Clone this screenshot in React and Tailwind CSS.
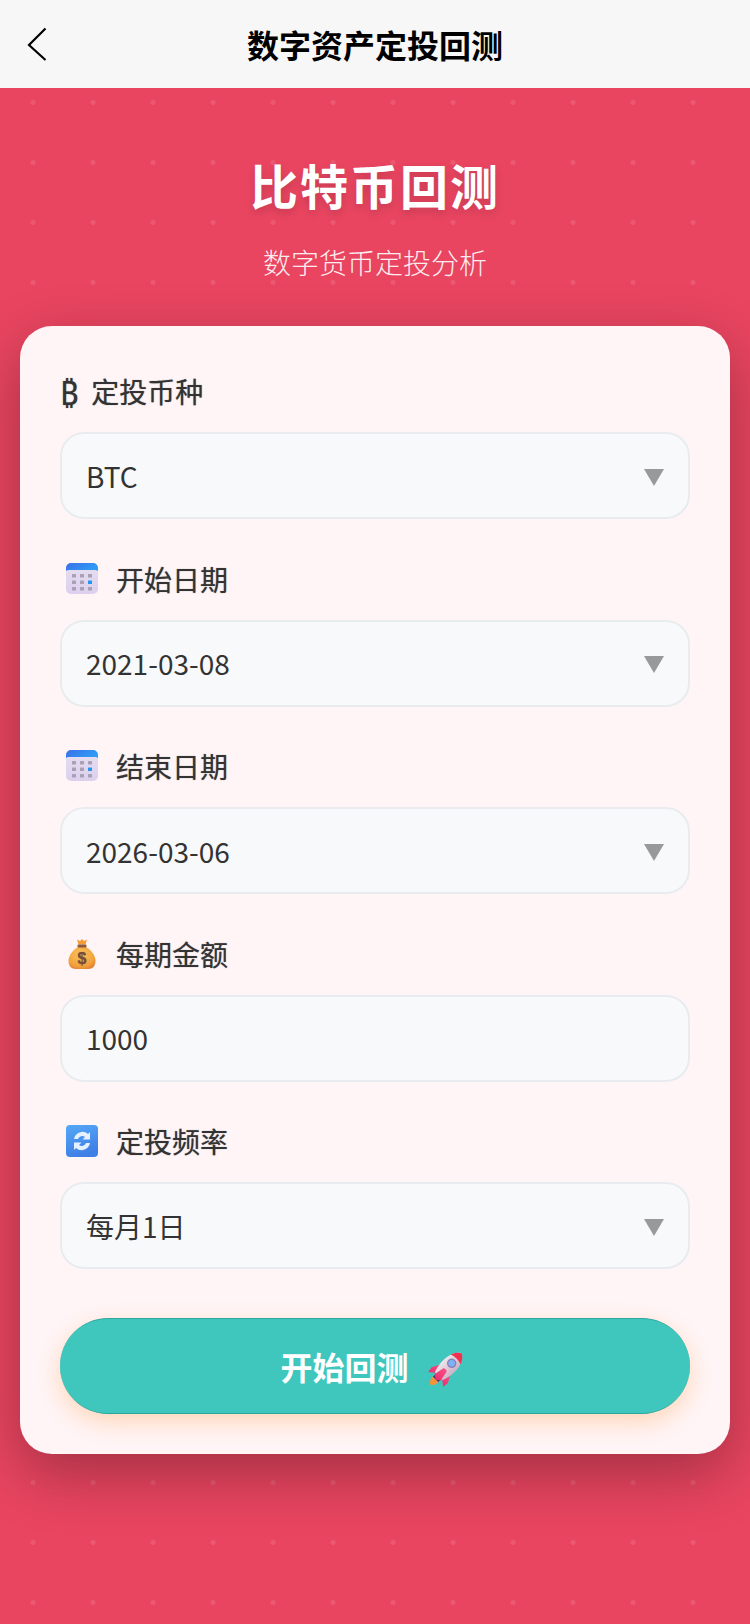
import React from "react";

const Calendar = () => (
  <svg width="32" height="32" viewBox="0 0 32 32" className="block">
    <defs>
      <linearGradient id="calTop" x1="0" y1="0" x2="1" y2="0.4">
        <stop offset="0" stopColor="#3b6fe8" />
        <stop offset="1" stopColor="#2f9bf5" />
      </linearGradient>
      <linearGradient id="calBody" x1="0" y1="0" x2="0" y2="1">
        <stop offset="0" stopColor="#e6dff0" />
        <stop offset="1" stopColor="#dcd0ee" />
      </linearGradient>
    </defs>
    <rect x="0" y="0" width="32" height="31" rx="5" fill="url(#calBody)" />
    <path d="M0 8V5a5 5 0 0 1 5-5h22a5 5 0 0 1 5 5v3q-1-1-3-1H3q-2 0-3 1z" fill="url(#calTop)" />
    {[6, 14, 22].map((x) =>
      [11, 17.5, 24].map((y) => (
        <rect key={`${x}-${y}`} x={x} y={y} width="4" height="3.6" rx="0.5" fill={x === 22 && y === 17.5 ? "#2196f3" : "#a9a0b5"} />
      ))
    )}
  </svg>
);

const Bag = () => (
  <svg width="32" height="32" viewBox="0 0 32 32" className="block">
    <defs>
      <radialGradient id="bagG" cx="0.45" cy="0.35" r="0.8">
        <stop offset="0" stopColor="#fbc45f" />
        <stop offset="0.65" stopColor="#f2a23c" />
        <stop offset="1" stopColor="#d9702f" />
      </radialGradient>
    </defs>
    <path d="M12 9C7 12 2.5 17 2.5 23c0 5 3 8 7 8h13c4 0 7-3 7-8 0-6-4.500-11-9.500-14z" fill="url(#bagG)" />
    <path d="M11 1.500l3 1.500 2-2 2 2 3-1.500-1.500 5h-7z" fill="#f59a36" />
    <rect x="11.500" y="6.500" width="9" height="3" rx="1" fill="#8a5a3c" />
    <text x="16" y="26" textAnchor="middle" fontSize="16" fontWeight="700" fill="#7c4a3a" fontFamily="'Liberation Sans', sans-serif">$</text>
  </svg>
);

const Refresh = () => (
  <svg width="32" height="32" viewBox="0 0 32 32" className="block">
    <defs>
      <linearGradient id="refG" x1="0" y1="0" x2="0.3" y2="1">
        <stop offset="0" stopColor="#56a8f8" />
        <stop offset="1" stopColor="#3f7fe6" />
      </linearGradient>
    </defs>
    <rect x="0" y="0" width="32" height="32" rx="4" fill="url(#refG)" />
    <path d="M8 14a8.500 8.500 0 0 1 14-5l2-2v7.500h-7.500l2.500-2.500a4.500 4.500 0 0 0-7 2z" fill="#e6f0ff" />
    <path d="M24 18a8.500 8.500 0 0 1-14 5l-2 2v-7.500h7.500l-2.500 2.500a4.500 4.500 0 0 0 7-2z" fill="#e6f0ff" />
  </svg>
);

const Rocket = () => (
  <svg width="36" height="36" viewBox="0 0 38 38" className="mt-[3px] block overflow-visible">
    <defs>
      <linearGradient id="rkBody" x1="0" y1="0" x2="1" y2="0">
        <stop offset="0" stopColor="#efe6ec" />
        <stop offset="1" stopColor="#cdb2c6" />
      </linearGradient>
      <linearGradient id="rkFin" x1="0" y1="0" x2="0" y2="1">
        <stop offset="0" stopColor="#f8508a" />
        <stop offset="1" stopColor="#ee2f6c" />
      </linearGradient>
    </defs>
    <g transform="rotate(45 19 19)">
      <path d="M15 34Q19 32 23 34Q24 41 19 44Q14 41 15 34z" fill="#f5923a" />
      <path d="M15 33h8v3h-8z" fill="#3d3a7a" />
      <path d="M12 20L7 30L8 36L14 31z" fill="url(#rkFin)" />
      <path d="M26 20L31 30L30 36L24 31z" fill="url(#rkFin)" />
      <path d="M19 -3C28 2 30 17 25 31L13 31C8 17 10 2 19 -3z" fill="url(#rkBody)" />
      <path d="M19 -3C22.500 -1 25 2 26.300 6Q19 3.500 11.700 6C13 2 15.500 -1 19 -3z" fill="#f5304f" />
      <path d="M16.500 22Q19 20 21.500 22L23.500 33L19 36L14.500 33z" fill="url(#rkFin)" />
      <circle cx="19" cy="12" r="4.200" fill="#7db2f5" stroke="#8a80b8" strokeWidth="1.500" />
    </g>
  </svg>
);

const Caret = () => (
  <svg width="20" height="17" viewBox="0 0 20 17" className="mt-[3px] block">
    <polygon points="0,0 20,0 10,17" fill="#999999" />
  </svg>
);

const Field = ({ icon, label, value, caret = true, last = false }) => (
  <div className={last ? "" : "mb-[38.5px]"}>
    <div className="flex h-[62px] items-start text-[28px] leading-[42px] font-normal text-[#333333] [text-shadow:0_0_1px_rgba(51,51,51,0.6)]">
      {icon}
      <span>{label}</span>
    </div>
    <div className="flex h-[87px] items-center justify-between rounded-[24px] border-2 border-[#e9ecef] bg-[#f8f9fa] pr-[24px] pl-[24px] text-[28px] text-[#333333]">
      <span>{value}</span>
      {caret && <Caret />}
    </div>
  </div>
);

const EmojiBox = ({ children }) => (
  <span className="mt-[5px] mr-[18px] ml-[6px] flex h-[32px] w-[32px] shrink-0 items-center justify-center">{children}</span>
);

export default function App() {
  return (
    <div className="flex min-h-[1624px] w-[750px] flex-col bg-[#e94560] font-['Noto_Sans_CJK_SC','Noto_Sans',sans-serif]">
      <header className="relative flex h-[88px] shrink-0 items-center justify-center bg-[#f7f7f7]">
        <svg width="22" height="36" viewBox="0 0 22 36" className="absolute top-[27px] left-[26px]">
          <path d="M19.500 1.500 L3 18 L19.500 33" fill="none" stroke="#000000" strokeWidth="2.200" />
        </svg>
        <h1 className="text-[32px] leading-[48px] font-bold text-black">数字资产定投回测</h1>
      </header>
      <main className="flex flex-1 flex-col bg-[radial-gradient(circle_at_33px_14.5px,rgba(255,255,255,0.1)_2px,transparent_3px)] bg-[length:60px_60px] px-[20px]">
        <div className="flex flex-col items-center pt-[60px] pb-[43px] text-white">
          <h2 className="text-[48px] leading-[72px] font-bold tracking-[2px] [text-shadow:0_4px_8px_rgba(0,0,0,0.15)]">比特币回测</h2>
          <p className="mt-[21px] text-[28px] leading-[42px] font-light opacity-90">数字货币定投分析</p>
        </div>
        <section className="rounded-[32px] bg-[#fff5f7] px-[40px] pt-[44px] pb-[40px] shadow-[0_20px_60px_rgba(0,0,0,0.3)]">
          <Field icon={<span className="mr-[13px] text-[32px] leading-[42px]">₿</span>} label="定投币种" value="BTC" />
          <Field icon={<EmojiBox><Calendar /></EmojiBox>} label="开始日期" value="2021-03-08" />
          <Field icon={<EmojiBox><Calendar /></EmojiBox>} label="结束日期" value="2026-03-06" />
          <Field icon={<EmojiBox><Bag /></EmojiBox>} label="每期金额" value="1000" caret={false} />
          <Field icon={<EmojiBox><Refresh /></EmojiBox>} label="定投频率" value="每月1日" last />
          <button className="mt-[49px] flex h-[96px] w-full items-center justify-center gap-[20px] rounded-[48px] border-y border-[#2fa79f] bg-[#3fc7be] pr-[5px] text-[32px] leading-[48px] font-bold text-white shadow-[0_8px_24px_rgba(255,159,67,0.35)]">
            <span>开始回测</span>
            <Rocket />
          </button>
        </section>
      </main>
    </div>
  );
}
